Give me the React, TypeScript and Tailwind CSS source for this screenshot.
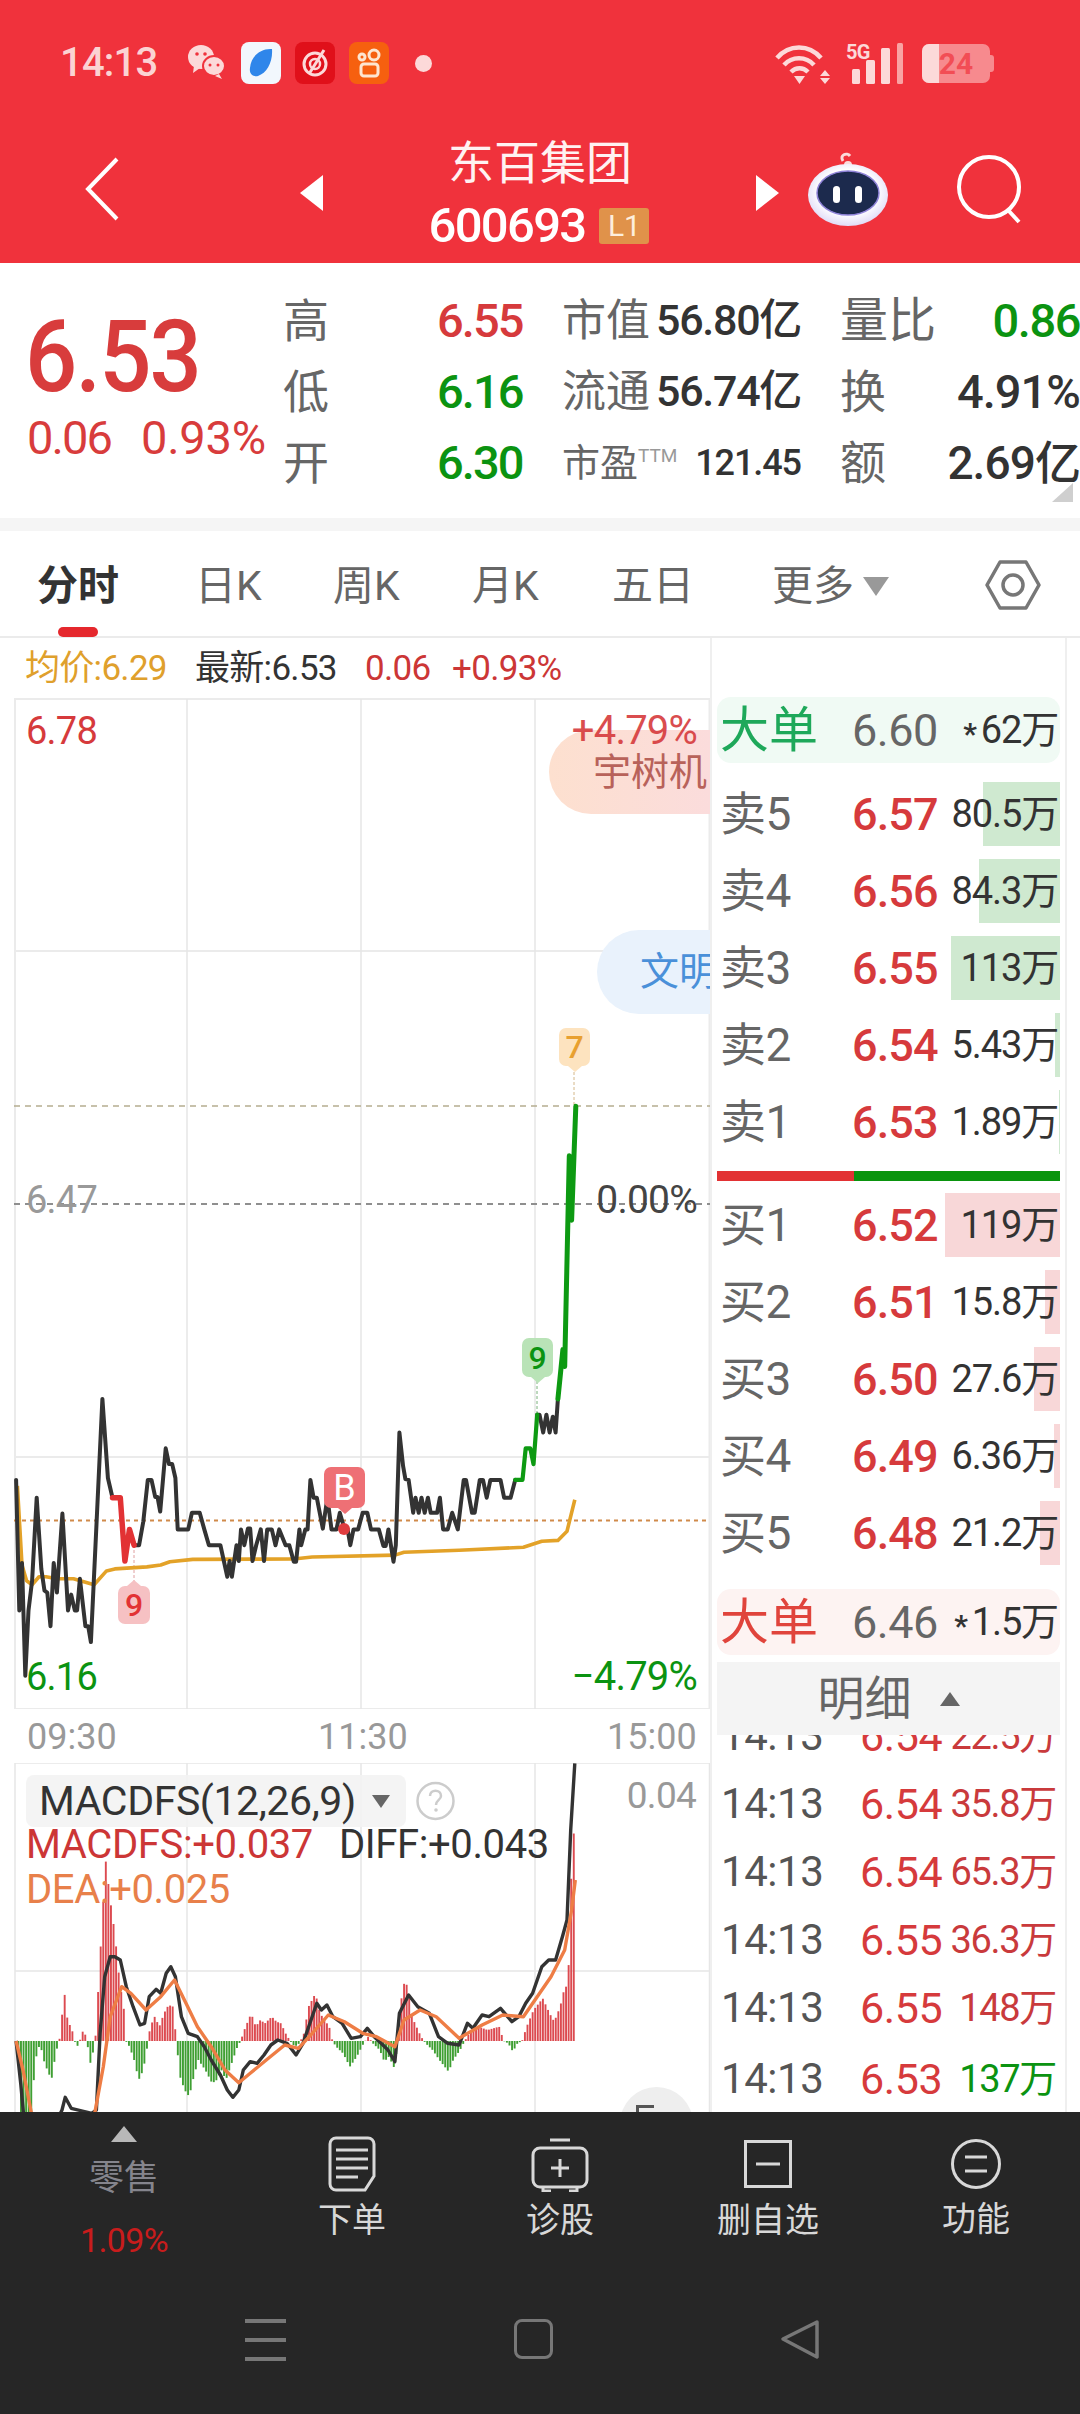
import type { ReactNode } from "react";

const RED = "text-[#d63a3c]";
const GREEN = "text-[#0b9311]";

// chart traces are read off zoomed crops, so x/y get mapped back to real px
const toPts = (list: number[][], sx: number, sy: number, oy: number) =>
  list.map(([x, y]) => `${(x / sx).toFixed(1)},${(y / sy + oy).toFixed(1)}`).join(" ");

const priceBlackA = [[35,885],[42,1215],[48,1095],[55,1380],[62,1215],[70,1140],[80,930],[90,1110],[97,1165],[103,1170],[110,1255],[117,1095],[124,1170],[136,970],[148,1215],[155,1175],[163,1215],[168,1215],[174,1135],[186,1255],[192,1255],[198,1295],[208,1050],[223,680],[235,880],[245,930]];
const priceRed = [[245,930],[262,930],[272,1090],[282,1010],[292,1050]];
const priceBlackB = [[292,1050],[303,1050],[312,990],[322,885],[330,885],[338,928],[343,928],[349,965],[361,805],[368,845],[375,845],[382,880],[387,1010],[410,1010],[418,968],[435,968],[445,1010],[455,1050],[480,1050],[495,1130],[500,1090],[505,1130],[515,1050],[520,1090],[525,1010],[532,1050],[540,1008],[545,1008],[550,1090],[558,1050],[568,1010],[575,1090],[582,1010],[592,1010],[600,1050],[608,1010],[622,1050],[630,1050],[640,1092],[645,1092],[652,1010],[656,1050],[665,1010],[670,1010],[676,885],[683,930],[690,930],[703,1008],[713,930],[722,1010],[733,1010],[740,968],[750,1008],[757,1010],[763,1050],[770,1010],[780,1010],[790,968],[800,968],[808,1010],[825,1010],[835,1052],[840,1052],[846,1010],[857,1092],[862,1050],[870,765],[878,850],[883,883],[890,885],[900,968],[905,930],[912,968],[918,930],[925,968],[932,930],[938,968],[952,968],[958,930],[965,1010],[975,1010],[985,968],[997,1010],[1010,885],[1015,885],[1028,968],[1034,968],[1045,885],[1052,885],[1060,930],[1068,885],[1090,885],[1098,930],[1112,930],[1122,885]];
const priceGreenA = [[1122,885],[1138,885],[1145,805],[1155,805],[1162,845],[1170,720]];
const priceBlackC = [[1170,720],[1175,720],[1183,765],[1190,720],[1197,765],[1204,725],[1210,765],[1215,680]];
const priceGreenB = [[1215,680],[1222,600],[1226,555],[1230,598],[1240,65],[1245,228],[1254,-60]];
const avgLine = [[38,900],[48,1100],[58,1140],[70,1150],[85,1130],[100,1130],[125,1135],[160,1135],[205,1150],[232,1115],[250,1110],[320,1105],[350,1100],[370,1092],[420,1086],[640,1085],[680,1080],[860,1075],[880,1068],[1000,1063],[1140,1055],[1180,1040],[1215,1038],[1235,1015],[1252,935]];

const diffLine = [[35,873],[45,1000],[55,1150]];
const diffLine2 = [[128,1100],[135,1080],[142,1042],[155,1075],[200,1090],[210,1080],[218,850],[228,680],[240,620],[250,620],[262,630],[275,710],[290,770],[305,825],[315,820],[325,740],[340,718],[350,730],[362,670],[372,650],[382,680],[395,800],[410,850],[430,860],[445,890],[460,930],[480,975],[495,1020],[507,1042],[520,1020],[530,960],[545,935],[560,940],[575,915],[590,885],[605,870],[625,880],[645,915],[660,880],[675,820],[690,760],[700,780],[712,765],[725,800],[745,820],[765,865],[785,860],[800,835],[815,860],[830,880],[845,900],[860,935],[870,790],[890,735],[910,770],[935,790],[955,860],[975,880],[1000,885],[1018,820],[1030,835],[1050,795],[1065,800],[1090,775],[1115,815],[1130,800],[1145,760],[1160,730],[1180,650],[1195,630],[1210,630],[1225,560],[1235,510],[1243,240],[1252,40]];
const deaLine = [[35,873],[50,960],[70,1100]];
const deaLine2 = [[205,1100],[225,950],[240,800],[265,710],[285,730],[318,780],[350,740],[380,690],[405,760],[430,830],[460,890],[490,960],[520,998],[545,970],[580,930],[620,885],[650,895],[680,850],[715,795],[750,815],[790,850],[820,860],[860,890],[880,810],[915,780],[950,800],[1000,865],[1050,825],[1095,795],[1140,800],[1170,740],[1200,680],[1230,600],[1245,480],[1253,390]];

const histEnvelope = [[36,873],[42,1090],[60,1090],[66,1090],[75,930],[85,880],[95,940],[110,990],[120,905],[127,873],[130,840],[138,725],[145,810],[155,840],[160,873],[168,890],[172,873],[175,845],[182,845],[187,873],[195,940],[205,880],[210,765],[218,570],[228,330],[238,450],[248,550],[258,690],[268,780],[272,873],[280,890],[290,930],[300,990],[310,960],[320,880],[325,830],[335,800],[345,830],[355,790],[365,765],[375,770],[382,873],[390,980],[400,1020],[410,1040],[420,980],[430,930],[445,960],[460,1000],[470,990],[480,960],[490,990],[500,950],[515,890],[522,873],[530,840],[545,790],[555,830],[565,810],[575,820],[590,800],[600,815],[610,820],[620,850],[630,873],[640,890],[650,880],[660,850],[670,770],[685,730],[695,790],[705,810],[715,830],[722,873],[730,890],[745,910],[760,950],[775,920],[790,880],[800,860],[810,880],[825,900],[835,935],[845,920],[857,955],[865,873],[875,700],[885,705],[895,800],[905,830],[915,860],[925,880],[940,900],[955,930],[975,965],[985,930],[1000,900],[1010,873],[1020,850],[1040,830],[1060,840],[1085,830],[1095,873],[1105,880],[1115,905],[1125,880],[1135,873],[1145,830],[1160,780],[1180,745],[1195,790],[1205,815],[1218,770],[1228,710],[1235,710],[1243,340],[1252,165]];

const histAt = (x: number) => {
  for (let i = 1; i < histEnvelope.length; i++) {
    const [x0, y0] = histEnvelope[i - 1];
    const [x1, y1] = histEnvelope[i];
    if (x <= x1) return y0 + ((y1 - y0) * (x - x0)) / (x1 - x0);
  }
  return 873;
};

const histBars: { x: number; y: number }[] = [];
for (let x = 38; x <= 1252; x += 5.6) histBars.push({ x, y: histAt(x) });

const askRows = [
  { label: "卖5", price: "6.57", vol: "80.5万", from: 983 },
  { label: "卖4", price: "6.56", vol: "84.3万", from: 979 },
  { label: "卖3", price: "6.55", vol: "113万", from: 951 },
  { label: "卖2", price: "6.54", vol: "5.43万", from: 1055 },
  { label: "卖1", price: "6.53", vol: "1.89万", from: 1059 },
];
const bidRows = [
  { label: "买1", price: "6.52", vol: "119万", from: 945 },
  { label: "买2", price: "6.51", vol: "15.8万", from: 1045 },
  { label: "买3", price: "6.50", vol: "27.6万", from: 1034 },
  { label: "买4", price: "6.49", vol: "6.36万", from: 1054 },
  { label: "买5", price: "6.48", vol: "21.2万", from: 1040 },
];
const ticks = [
  { p: "6.54", v: "22.5万", green: false },
  { p: "6.54", v: "35.8万", green: false },
  { p: "6.54", v: "65.3万", green: false },
  { p: "6.55", v: "36.3万", green: false },
  { p: "6.55", v: "148万", green: false },
  { p: "6.53", v: "137万", green: true },
];

function BookRow({ label, price, vol, from, bar }: { label: string; price: string; vol: string; from: number; bar: string }) {
  return (
    <div className="relative h-[64px] mb-[13px] flex items-center">
      <div className={`absolute right-0 top-0 bottom-0 ${bar}`} style={{ width: 1060 - from }} />
      <span className="relative w-[135px] pl-[3px] text-[46px] leading-none text-[#666] tracking-[-0.01em]">{label}</span>
      <span className={`relative text-[45px] leading-none font-medium tracking-[-0.02em] ${RED}`}>{price}</span>
      <span className="relative ml-auto pr-[2px] text-[38px] leading-none text-[#333] tracking-[-0.03em]">{vol}</span>
    </div>
  );
}

function BigOrder({ tone, bg, price, vol }: { tone: string; bg: string; price: string; vol: string }) {
  return (
    <div className={`h-[66px] rounded-[14px] flex items-center ${bg}`}>
      <span className={`w-[135px] pl-[3px] text-[49px] leading-none ${tone}`}>大单</span>
      <span className="text-[45px] leading-none text-[#666] tracking-[-0.01em]">{price}</span>
      <span className="ml-auto pr-[2px] flex items-center text-[38px] leading-none text-[#333] tracking-[-0.03em]">
        <span className="mr-[5px] mt-[8px] text-[30px] leading-none font-bold">*</span>
        {vol}
      </span>
    </div>
  );
}

function Tag({ className, children, tail }: { className: string; children: ReactNode; tail: "up" | "down" }) {
  return (
    <div className={`absolute flex items-center justify-center rounded-[7px] ${className}`}>
      {children}
      <svg
        className={`absolute left-1/2 -translate-x-1/2 ${tail === "down" ? "top-full" : "bottom-full rotate-180"} text-inherit`}
        width="14"
        height="6"
        viewBox="0 0 14 6"
      >
        <path d="M0 0h14L7 6z" fill="currentColor" />
      </svg>
    </div>
  );
}

function PriceChart() {
  return (
    <div className="relative h-[1011px] overflow-hidden">
      <svg className="absolute left-0 top-0" width="710" height="1011" viewBox="0 698 710 1011">
        <g stroke="#ebebeb" strokeWidth="2" fill="none">
          <path d="M15 699H709.5V1709H15Z" />
          <path d="M15 951H709.5M15 1457H709.5" />
        </g>
        <path d="M187 699V1709M361 699V1709M535 699V1709" stroke="#e6e6e6" strokeWidth="1.5" />
        <path d="M14 1106H710" stroke="#b5ad90" strokeWidth="1.5" strokeDasharray="6 5" />
        <path d="M14 1204H710" stroke="#8f8f8f" strokeWidth="2" strokeDasharray="6 5" />
        <path d="M14 1520.6H710" stroke="#d08a4a" strokeWidth="2" strokeDasharray="4 4" />
        <path d="M574 1072V1106" stroke="#d4b88a" strokeWidth="1" strokeDasharray="3 2" />
        <path d="M537 1381V1415" stroke="#7bb27d" strokeWidth="1" strokeDasharray="3 2" />
        <path d="M134 1545V1581" stroke="#e0a0a0" strokeWidth="1" strokeDasharray="3 2" />
        <polyline points={toPts(avgLine, 2.178, 2.529, 1130)} fill="none" stroke="#e3a228" strokeWidth="3.6" strokeLinejoin="round" />
        <g fill="none" strokeLinejoin="round" strokeLinecap="round">
          <polyline points={toPts(priceBlackA, 2.178, 2.529, 1130)} stroke="#333" strokeWidth="4" />
          <polyline points={toPts(priceBlackB, 2.178, 2.529, 1130)} stroke="#333" strokeWidth="4" />
          <polyline points={toPts(priceBlackC, 2.178, 2.529, 1130)} stroke="#333" strokeWidth="4" />
          <polyline points={toPts(priceRed, 2.178, 2.529, 1130)} stroke="#e23234" strokeWidth="5.5" />
          <polyline points={toPts(priceGreenA, 2.178, 2.529, 1130)} stroke="#0d9a12" strokeWidth="4.2" />
          <polyline points={toPts(priceGreenB, 2.178, 2.529, 1130)} stroke="#0d9a12" strokeWidth="5" />
        </g>
        <circle cx="344" cy="1529" r="6" fill="#e03c3f" />
      </svg>

      <div className="absolute left-[549px] top-[32px] right-0 h-[84px] rounded-l-[42px] bg-gradient-to-r from-[#fde0cf] to-[#fbdcdc] flex items-center pl-[44px] text-[38px] leading-none text-[#b8625a] whitespace-nowrap">
        宇树机
      </div>
      <div className="absolute left-[597px] top-[232px] right-0 h-[84px] rounded-l-[42px] bg-[#e9f2fc] overflow-hidden flex items-center pl-[43px] text-[39px] leading-none text-[#4a90d9] whitespace-nowrap">
        文明
      </div>

      <span className={`absolute left-[26px] top-[14px] text-[38px] leading-[38px] tracking-[-0.02em] ${RED}`}>6.78</span>
      <span className={`absolute right-[13px] top-[14px] text-[40px] leading-[38px] tracking-[-0.02em] opacity-90 ${RED}`}>+4.79%</span>
      <span className="absolute left-[26px] top-[483px] text-[38px] leading-[38px] tracking-[-0.02em] text-[#999]">6.47</span>
      <span className="absolute right-[13px] top-[483px] text-[39px] leading-[38px] tracking-[-0.02em] text-[#444]">0.00%</span>
      <span className={`absolute left-[26px] top-[960px] text-[38px] leading-[38px] tracking-[-0.02em] ${GREEN}`}>6.16</span>
      <span className={`absolute right-[13px] top-[960px] text-[40px] leading-[38px] tracking-[-0.02em] ${GREEN}`}>−4.79%</span>

      <Tag className="left-[559px] top-[330px] w-[31px] h-[38px] bg-[#fde3bf] text-[#fde3bf]" tail="down">
        <span className="text-[32px] leading-none font-medium text-[#e8a030]">7</span>
      </Tag>
      <Tag className="left-[522px] top-[640px] w-[31px] h-[39px] bg-[#b9e3b7] text-[#b9e3b7]" tail="down">
        <span className={`text-[32px] leading-none font-medium ${GREEN}`}>9</span>
      </Tag>
      <Tag className="left-[118px] top-[888px] w-[32px] h-[38px] bg-[#f6c1c3] text-[#f6c1c3]" tail="up">
        <span className="text-[32px] leading-none font-medium text-[#e23234]">9</span>
      </Tag>
      <Tag className="left-[324px] top-[769px] w-[41px] h-[41px] bg-[#ee7075] text-[#ee7075]" tail="down">
        <span className="text-[36px] leading-none text-white">B</span>
      </Tag>
    </div>
  );
}

function MacdChart() {
  return (
    <div className="relative flex-1 overflow-hidden">
      <svg className="absolute left-0 top-0" width="710" height="349" viewBox="0 1763 710 349">
        <g stroke="#e6e6e6" strokeWidth="1.5" fill="none">
          <path d="M15 1763V2112M187 1763V2112M361 1763V2112M535 1763V2112M709.5 1763V2112" />
          <path d="M15 1763H710M15 1971H710" />
        </g>
        {histBars.map((b, i) => {
          const x = b.x / 2.178;
          const y = b.y / 3 + 1750;
          const up = b.y < 873;
          return <rect key={i} x={x} y={up ? y : 2041} width="1.9" height={Math.abs(y - 2041)} fill={up ? "#dc4a50" : "#3f9f33"} />;
        })}
        <g fill="none" strokeLinejoin="round">
          <polyline points={toPts(diffLine, 2.178, 3, 1750)} stroke="#333" strokeWidth="3.4" />
          <polyline points={toPts(diffLine2, 2.178, 3, 1750)} stroke="#333" strokeWidth="3.4" />
          <polyline points={toPts(deaLine, 2.178, 3, 1750)} stroke="#ee7d45" strokeWidth="3.4" />
          <polyline points={toPts(deaLine2, 2.178, 3, 1750)} stroke="#ee7d45" strokeWidth="3.4" />
        </g>
      </svg>

      <div className="absolute left-[26px] top-[12px] w-[380px] h-[52px] rounded-[8px] bg-[#f3f3f3]/90 flex items-center pl-[13px] text-[41px] leading-none text-[#333] tracking-[-0.01em]">
        MACDFS(12,26,9)
        <svg className="absolute left-[346px] top-[20px]" width="18" height="13" viewBox="0 0 18 13">
          <path d="M0 0h18L9 13z" fill="#666" />
        </svg>
      </div>
      <svg className="absolute left-[415px] top-[18px]" width="41" height="40" viewBox="0 0 41 40">
        <circle cx="20.5" cy="20" r="18" fill="none" stroke="#ccc" strokeWidth="2.5" />
        <path d="M15 15c0-7 11-7 11 0 0 4-5 4-5 9" fill="none" stroke="#ccc" strokeWidth="2.5" />
        <circle cx="21" cy="29" r="1.8" fill="#ccc" />
      </svg>
      <span className="absolute right-[14px] top-[14px] text-[37px] leading-[38px] text-[#999] tracking-[-0.02em]">0.04</span>
      <span className="absolute left-[26px] top-[63px] text-[40px] leading-[38px] text-[#cc3636] tracking-[-0.01em]">MACDFS:+0.037</span>
      <span className="absolute left-[339px] top-[63px] text-[40px] leading-[38px] text-[#333] tracking-[-0.01em]">DIFF:+0.043</span>
      <span className="absolute left-[26px] top-[108px] text-[40px] leading-[38px] text-[#e8804a] tracking-[-0.01em]">DEA:+0.025</span>

      <div className="absolute left-[620px] top-[324px] w-[73px] h-[73px] rounded-full bg-[#eeeeee]">
        <div className="absolute left-[16px] top-[18px] w-[18px] h-[7px] border-t-[3px] border-l-[3px] border-[#555]" />
      </div>
    </div>
  );
}

function StatusBar() {
  return (
    <div className="h-[126px] flex items-center relative">
      <span className="ml-[60px] w-[127px] text-[40px] leading-none font-medium text-[#fbd3d3] tracking-[-0.02em]">14:13</span>
      <svg width="40" height="40" viewBox="0 0 40 40" className="-mt-[2px]">
        <ellipse cx="14" cy="15" rx="13" ry="12" fill="#fcd9d9" />
        <path d="M7 24l-1 7 7-5z" fill="#fcd9d9" />
        <ellipse cx="27" cy="24" rx="11" ry="10" fill="#fcd9d9" stroke="#f0323c" strokeWidth="2" />
        <path d="M32 32l3 5-7-3z" fill="#fcd9d9" />
        <g fill="#f0323c">
          <circle cx="10" cy="12" r="1.8" />
          <circle cx="18" cy="12" r="1.8" />
          <circle cx="23" cy="23" r="1.5" />
          <circle cx="31" cy="23" r="1.5" />
        </g>
      </svg>
      <svg width="40" height="42" viewBox="0 0 40 42" className="ml-[14px]">
        <rect width="40" height="42" rx="8" fill="#f2f7fd" />
        <path d="M31 7C20 6 10 14 9 26c-1 6 3 9 8 8 9-3 15-14 14-27z" fill="#2f86ea" />
      </svg>
      <svg width="40" height="42" viewBox="0 0 40 42" className="ml-[14px]">
        <rect width="40" height="42" rx="8" fill="#e0101a" />
        <circle cx="20" cy="22" r="11" fill="none" stroke="#fcd9d9" strokeWidth="3" />
        <circle cx="20" cy="22" r="5" fill="none" stroke="#fcd9d9" strokeWidth="2.5" />
        <path d="M14 32L29 8" stroke="#fcd9d9" strokeWidth="3" />
      </svg>
      <svg width="40" height="42" viewBox="0 0 40 42" className="ml-[14px]">
        <rect width="40" height="42" rx="8" fill="#f6600f" />
        <g fill="none" stroke="#fde5d0" strokeWidth="3">
          <circle cx="25" cy="13" r="5" />
          <circle cx="13" cy="15" r="3" />
          <rect x="12" y="22" width="17" height="12" rx="3" />
        </g>
      </svg>
      <div className="ml-[26px] w-[17px] h-[17px] rounded-full bg-[#fcd9d9]" />

      <svg width="56" height="42" viewBox="0 0 56 42" className="absolute left-[775px] top-[43px]">
        <g fill="none" stroke="#fcd9d9" strokeWidth="4.5">
          <path d="M2 15C14 1 34 1 46 15" />
          <path d="M9 22c8-9 22-9 30 0" />
          <path d="M16 29c5-5 12-5 17 0" />
        </g>
        <path d="M19 33h11l-5.500 8z" fill="#fcd9d9" />
        <path d="M50 27l5 6H45zM45 35h10l-5 6z" fill="#fcd9d9" />
      </svg>
      <span className="absolute left-[846px] top-[42px] text-[20px] leading-none font-bold text-[#fcd9d9] tracking-[-0.04em]">5G</span>
      <svg width="54" height="42" viewBox="0 0 54 42" className="absolute left-[852px] top-[43px]">
        <rect x="0" y="26" width="8" height="15" rx="1.500" fill="#fcd9d9" />
        <rect x="14" y="17" width="9" height="24" rx="1.500" fill="#fcd9d9" />
        <rect x="29" y="5" width="9" height="36" rx="1.500" fill="#fcd9d9" />
        <rect x="45" y="0" width="6" height="41" rx="1.500" fill="#f9a3a3" />
      </svg>
      <div className="absolute left-[922px] top-[44px] w-[68px] h-[39px] rounded-[7px] bg-[#f78a8e] overflow-hidden flex items-center justify-center">
        <div className="absolute left-0 top-0 bottom-0 w-[17px] bg-[#fcd9d9]" />
        <span className="relative text-[30px] leading-none font-bold text-[#f0323c]/70">24</span>
      </div>
      <div className="absolute left-[990px] top-[55px] w-[4px] h-[17px] rounded-r-[3px] bg-[#f78a8e]" />
    </div>
  );
}

function NavBarTop() {
  return (
    <div className="relative h-[137px]">
      <div className="absolute left-0 right-0 top-[12px] flex flex-col items-center text-white">
        <span className="text-[46px] leading-[50px] text-[#fff2f2]">东百集团</span>
        <div className="flex items-center mt-[15px] -ml-[2px]">
          <span className="text-[49px] leading-[46px] font-medium text-white tracking-[-0.035em]">600693</span>
          <span className="ml-[14px] w-[50px] h-[36px] rounded-[3px] bg-[#e0924a] text-[#fdeedd] text-[30px] leading-[36px] text-center">L1</span>
        </div>
      </div>
      <svg className="absolute left-[82px] top-[30px]" width="40" height="66" viewBox="0 0 40 66">
        <path d="M35 3L6 33l29 30" fill="none" stroke="#fff" strokeWidth="4" />
      </svg>
      <svg className="absolute left-[300px] top-[49px]" width="24" height="36" viewBox="0 0 24 36">
        <path d="M23 0v36L0 18z" fill="#fff" />
      </svg>
      <svg className="absolute left-[755px] top-[49px]" width="24" height="36" viewBox="0 0 24 36">
        <path d="M1 0v36l23-18z" fill="#fff" />
      </svg>
      <svg className="absolute left-[805px] top-[25px]" width="86" height="76" viewBox="0 0 86 76">
        <defs>
          <radialGradient id="bot" cx="50%" cy="45%" r="60%">
            <stop offset="60%" stopColor="#ffffff" />
            <stop offset="100%" stopColor="#d9d3f5" />
          </radialGradient>
        </defs>
        <path d="M38 10c-4-6 4-9 7-5" fill="none" stroke="#fbdcdc" strokeWidth="3" />
        <circle cx="43" cy="14" r="4" fill="#fbdcdc" />
        <ellipse cx="43" cy="44" rx="40" ry="31" fill="url(#bot)" />
        <ellipse cx="43" cy="42" rx="31" ry="22" fill="#1c2a4d" stroke="#8f83d8" strokeWidth="1.5" />
        <rect x="28" y="35" width="7" height="17" rx="3.500" fill="#fff" />
        <rect x="50" y="35" width="7" height="17" rx="3.500" fill="#fff" />
      </svg>
      <svg className="absolute left-[955px] top-[28px]" width="72" height="72" viewBox="0 0 72 72">
        <circle cx="34" cy="33" r="30" fill="none" stroke="#fff" strokeWidth="4" />
        <path d="M53 56l11 12" stroke="#fff" strokeWidth="4" />
      </svg>
    </div>
  );
}

function QuoteCell({ label, value, tone }: { label: string; value: string; tone: string }) {
  return (
    <div className="flex items-center h-[71px]">
      <span className="w-[154px] text-[46px] leading-none text-[#666]">{label}</span>
      <span className={`text-[47px] leading-none font-medium tracking-[-0.04em] ${tone}`}>{value}</span>
    </div>
  );
}

function QuotePanel() {
  return (
    <div className="relative h-[255px] bg-white flex overflow-hidden">
      <div className="w-[283px] pl-[25px] pt-[46px]">
        <div className="inline-block origin-left scale-x-[0.92] text-[100px] leading-[96px] font-medium text-[#d83c3c] tracking-[-0.02em]">6.53</div>
        <div className="mt-[9px] ml-[2px] flex text-[47px] leading-none text-[#d83c3c] tracking-[-0.04em] whitespace-nowrap">
          <span className="w-[114px]">0.06</span>
          <span className="tracking-[-0.005em]">0.93%</span>
        </div>
      </div>
      <div className="w-[279px] pt-[22px]">
        <QuoteCell label="高" value="6.55" tone={RED} />
        <QuoteCell label="低" value="6.16" tone={GREEN} />
        <QuoteCell label="开" value="6.30" tone={GREEN} />
      </div>
      <div className="w-[278px] pt-[22px]">
        <div className="flex items-center h-[71px] w-[239px] justify-between">
          <span className="text-[44px] leading-none text-[#666]">市值</span>
          <span className="text-[43px] leading-none font-medium text-[#333] tracking-[-0.03em]">56.80亿</span>
        </div>
        <div className="flex items-center h-[71px] w-[239px] justify-between">
          <span className="text-[44px] leading-none text-[#666]">流通</span>
          <span className="text-[43px] leading-none font-medium text-[#333] tracking-[-0.03em]">56.74亿</span>
        </div>
        <div className="flex items-center h-[71px] w-[239px] justify-between">
          <span className="flex items-start text-[38px] leading-none text-[#666]">
            市盈<span className="text-[19px] leading-none text-[#999] mt-[2px]">TTM</span>
          </span>
          <span className="text-[36px] leading-none font-medium text-[#333] tracking-[-0.03em]">121.45</span>
        </div>
      </div>
      <div className="w-[240px] pt-[22px]">
        <div className="flex items-center justify-between h-[71px]">
          <span className="text-[48px] leading-none text-[#666]">量比</span>
          <span className={`text-[47px] leading-none font-medium tracking-[-0.03em] ${GREEN}`}>0.86</span>
        </div>
        <div className="flex items-center justify-between h-[71px]">
          <span className="text-[46px] leading-none text-[#666]">换</span>
          <span className="text-[47px] leading-none font-medium text-[#333] tracking-[-0.02em]">4.91%</span>
        </div>
        <div className="flex items-center justify-between h-[71px]">
          <span className="text-[46px] leading-none text-[#666]">额</span>
          <span className="text-[46px] leading-none font-medium text-[#333] tracking-[-0.02em]">2.69亿</span>
        </div>
      </div>
      <svg className="absolute left-[1052px] top-[220px]" width="21" height="19" viewBox="0 0 21 19">
        <path d="M21 0v19H0z" fill="#cfcfcf" />
      </svg>
    </div>
  );
}

function Tabs() {
  const tabCls = "absolute top-[34px] text-[41px] leading-[42px] text-[#666]";
  return (
    <div className="relative h-[107px] border-b-2 border-[#ebebeb] bg-white">
      <span className="absolute left-[37px] top-[34px] text-[41px] leading-[42px] font-bold text-[#333]">分时</span>
      <div className="absolute left-[58px] bottom-[-1px] w-[40px] h-[10px] rounded-full bg-[#e5282d]" />
      <span className={`${tabCls} left-[195px]`}>日K</span>
      <span className={`${tabCls} left-[333px]`}>周K</span>
      <span className={`${tabCls} left-[472px]`}>月K</span>
      <span className={`${tabCls} left-[612px]`}>五日</span>
      <span className={`${tabCls} left-[772px]`}>更多</span>
      <svg className="absolute left-[863px] top-[46px]" width="26" height="19" viewBox="0 0 26 19">
        <path d="M0 0h26L13 19z" fill="#999" />
      </svg>
      <svg className="absolute left-[984px] top-[28px]" width="58" height="52" viewBox="0 0 58 52">
        <path d="M16 3h26l13 23-13 23H16L3 26z" fill="none" stroke="#777" strokeWidth="3.500" strokeLinejoin="round" />
        <circle cx="29" cy="26" r="10" fill="none" stroke="#777" strokeWidth="3.500" />
      </svg>
    </div>
  );
}

function BookPanel() {
  return (
    <div className="w-[357px] h-full border-x-2 border-[#efefef] px-[5px] pt-[59px] flex flex-col">
      <BigOrder tone="text-[#1ea85a]" bg="bg-[#f0faf4]" price="6.60" vol="62万" />
      <div className="h-[19px] shrink-0" />
      {askRows.map((r) => (
        <BookRow key={r.label} {...r} bar="bg-[#cfe9d0]" />
      ))}
      <div className="h-[10px] mt-[4px] flex shrink-0">
        <div className="w-[137px] bg-[#e23234]" />
        <div className="flex-1 bg-[#0a940e]" />
      </div>
      <div className="h-[12px] shrink-0" />
      {bidRows.map((r) => (
        <BookRow key={r.label} {...r} bar="bg-[#f8d7d8]" />
      ))}
      <div className="h-[11px] shrink-0" />
      <BigOrder tone="text-[#e0443c]" bg="bg-[#fdf3f2]" price="6.46" vol="1.5万" />
      <div className="h-[7px] shrink-0" />
      <div className="relative z-10 h-[73px] shrink-0 bg-[#f4f4f4] flex items-center justify-center">
        <span className="text-[47px] leading-none text-[#666] mr-[28px]">明细</span>
        <svg width="20" height="14" viewBox="0 0 20 14">
          <path d="M10 0l10 14H0z" fill="#666" />
        </svg>
      </div>
      <div className="flex-1 overflow-hidden">
        {ticks.map((t, i) => (
          <div key={i} className={`h-[68px] flex items-center ${i === 0 ? "-mt-[33px]" : ""} ${i === 5 ? "mt-[3px]" : ""}`}>
            <span className="w-[143px] pl-[4px] text-[42px] leading-none text-[#555] tracking-[-0.01em]">14:13</span>
            <span className={`text-[43px] leading-none tracking-[-0.01em] ${RED}`}>{t.p}</span>
            <span className={`ml-auto pr-[4px] text-[38px] leading-none tracking-[-0.035em] ${t.green ? GREEN : "text-[#c93a3c]"}`}>{t.v}</span>
          </div>
        ))}
      </div>
    </div>
  );
}

function BottomBar() {
  const label = "text-[34px] leading-none text-[#d8d8d8] mt-[11px]";
  return (
    <div className="h-[302px] bg-[#262626] flex flex-col shrink-0">
      <div className="h-[168px] relative">
        <div className="absolute left-[62px] top-[14px] w-[124px] flex flex-col items-center">
          <svg width="26" height="16" viewBox="0 0 26 16">
            <path d="M13 0l13 16H0z" fill="#b8b8b8" />
          </svg>
          <span className="mt-[19px] text-[35px] leading-none text-[#85858d]">零售</span>
          <span className="mt-[27px] text-[34px] leading-none text-[#c81c1c] tracking-[-0.02em]">1.09%</span>
        </div>
        <div className="absolute left-[302px] top-[24px] w-[100px] flex flex-col items-center">
          <svg width="48" height="56" viewBox="0 0 48 56" fill="none" stroke="#d8d8d8" strokeWidth="3">
            <path d="M8 2h32a6 6 0 0 1 6 6v32l-9 14H8a6 6 0 0 1-6-6V8a6 6 0 0 1 6-6z" />
            <path d="M8 14h32M8 23h32M8 32h32M8 41h22" />
          </svg>
          <span className={label}>下单</span>
        </div>
        <div className="absolute left-[510px] top-[26px] w-[100px] flex flex-col items-center">
          <svg width="58" height="54" viewBox="0 0 58 54" fill="none" stroke="#d8d8d8" strokeWidth="3">
            <path d="M19 2h20" />
            <rect x="2" y="10" width="54" height="39" rx="7" />
            <path d="M29 21v18M20 30h18" />
            <path d="M12 50v3h8M38 53h8v-3" />
          </svg>
          <span className={label}>诊股</span>
        </div>
        <div className="absolute left-[717px] top-[28px] w-[102px] flex flex-col items-center">
          <svg width="48" height="48" viewBox="0 0 48 48" fill="none" stroke="#d8d8d8" strokeWidth="3">
            <rect x="1.500" y="1.500" width="45" height="45" />
            <path d="M12 24h24" />
          </svg>
          <span className="text-[34px] leading-none text-[#d8d8d8] mt-[15px] whitespace-nowrap">删自选</span>
        </div>
        <div className="absolute left-[926px] top-[27px] w-[100px] flex flex-col items-center">
          <svg width="50" height="50" viewBox="0 0 50 50" fill="none" stroke="#d8d8d8" strokeWidth="3">
            <circle cx="25" cy="25" r="23.500" />
            <path d="M14 18h22M14 32h22" />
          </svg>
          <span className="text-[34px] leading-none text-[#d8d8d8] mt-[13px]">功能</span>
        </div>
      </div>
      <div className="relative flex-1">
        <div className="absolute left-[245px] top-[39px] w-[41px] flex flex-col gap-[15px]">
          <div className="h-[4px] bg-[#777]" />
          <div className="h-[4px] bg-[#777]" />
          <div className="h-[4px] bg-[#777]" />
        </div>
        <div className="absolute left-[514px] top-[39px] w-[39px] h-[40px] rounded-[8px] border-[3px] border-[#777]" />
        <svg className="absolute left-[779px] top-[39px]" width="42" height="41" viewBox="0 0 42 41">
          <path d="M38 3L4 20l34 18z" fill="none" stroke="#777" strokeWidth="3.500" strokeLinejoin="round" />
        </svg>
      </div>
    </div>
  );
}

export default function App() {
  return (
    <div className="w-[1080px] h-[2414px] overflow-hidden flex flex-col bg-white font-[Roboto,'Noto_Sans_CJK_SC',sans-serif]">
      <div className="h-[263px] shrink-0 bg-[#f0323c]">
        <StatusBar />
        <NavBarTop />
      </div>
      <QuotePanel />
      <div className="h-[13px] shrink-0 bg-[#f5f5f5]" />
      <Tabs />

      <div className="flex flex-1 min-h-0">
        <div className="w-[710px] shrink-0 flex flex-col">
          <div className="relative h-[60px] shrink-0 flex items-center text-[35px] leading-none tracking-[-0.02em] whitespace-nowrap">
            <span className="ml-[25px] w-[170px] text-[#dfa02c]">均价:6.29</span>
            <span className="w-[170px] text-[#333]">最新:6.53</span>
            <span className="w-[87px] text-[#cc3636]">0.06</span>
            <span className="text-[#cc3636]">+0.93%</span>
          </div>
          <PriceChart />
          <div className="relative h-[54px] shrink-0 text-[36px] leading-none text-[#999]">
            <span className="absolute left-[27px] top-[10px]">09:30</span>
            <span className="absolute left-[318px] top-[10px]">11:30</span>
            <span className="absolute left-[607px] top-[10px]">15:00</span>
          </div>
          <MacdChart />
        </div>
        <BookPanel />
      </div>

      <BottomBar />
    </div>
  );
}
